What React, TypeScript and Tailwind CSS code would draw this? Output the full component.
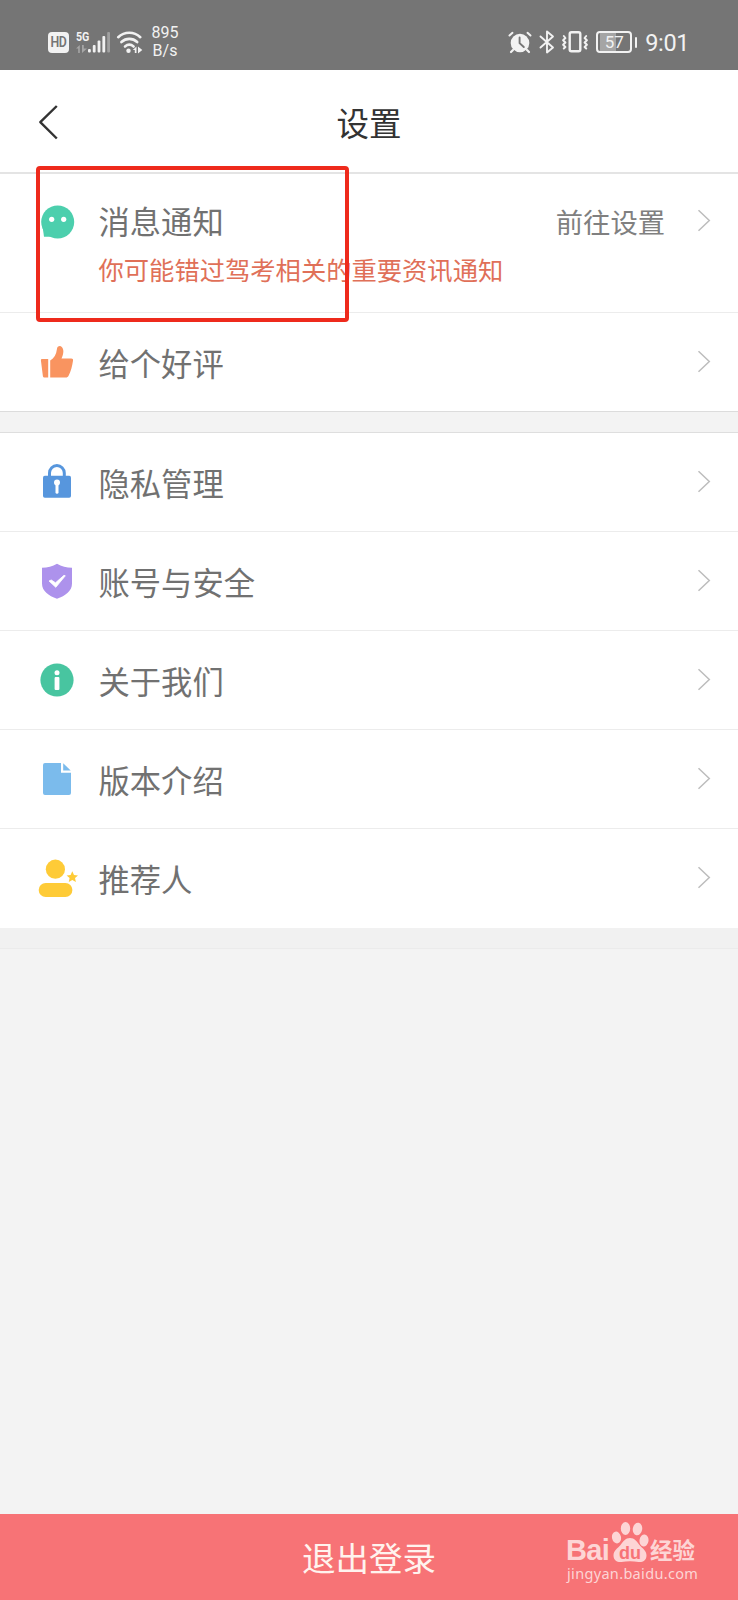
import type { ReactNode } from 'react';

const cjk = "font-['Noto_Sans_CJK_SC',sans-serif]";

function StatusBar() {
  return (
    <header className="flex h-[70px] shrink-0 items-center bg-[#757575] pt-[14px] pl-[48px] font-['Roboto',sans-serif] text-[#f2f2f2]">
      <div className="flex h-[21px] w-[21px] items-center justify-center rounded-[4px] bg-[#f2f2f2] pt-[1px] text-[13px] font-semibold tracking-tight text-[#757575]">
        <span className="origin-center scale-x-95 scale-y-110 leading-none">HD</span>
      </div>
      <div className="ml-[7px] flex h-[22px] w-[35px] items-end">
        <div className="flex w-[12px] flex-col">
          <span className="w-[14px] origin-left scale-x-[.82] text-[13px] leading-[11px] font-bold">5G</span>
          <svg className="mt-[2px] h-[9px] w-[11px]" viewBox="0 0 11 9" fill="#a6a6a6">
            <path d="M0 4.500 3.800 1v8H2.200V4.500zM6 1h1.800v3.500H11L6 9z" />
          </svg>
        </div>
        <svg className="h-[22px] w-[23px]" viewBox="0 0 23 22" fill="#f2f2f2">
          <rect x="0" y="18" width="2.8" height="3.5" rx="1" />
          <rect x="4.8" y="14" width="2.8" height="7.5" rx="1" />
          <rect x="9.6" y="9.5" width="2.8" height="12" rx="1" />
          <rect x="14.4" y="5" width="2.8" height="16.5" rx="1" />
          <rect x="19.2" y="1" width="2.8" height="20.5" rx="1" fill="#a0a0a0" />
        </svg>
      </div>
      <svg className="ml-[5px] h-[23px] w-[27px]" viewBox="0 0 27 23" fill="none" stroke="#f2f2f2" strokeWidth="2.6" strokeLinecap="round">
        <path d="M2.200 6.200C8.500 .2 18 .2 24.300 6.200" />
        <path d="M5.400 11C10 6.800 16.600 6.800 21.200 11" />
        <path d="M9 15.500c2.600-2.200 6-2.200 8.600 0" />
        <circle cx="12.500" cy="19.800" r="2.200" fill="#f2f2f2" stroke="none" />
        <path d="M16.800 19 20.500 15.500v6.500h-1.700v-3zM22 15.500l4.300 3.500-4.300 3.500z" fill="#f2f2f2" stroke="none" />
      </svg>
      <div className="ml-[7px] flex w-[30px] flex-col items-center text-[16px] leading-[18px]">
        <span>895</span>
        <span>B/s</span>
      </div>
      <div className="ml-auto flex items-center pr-[49px]">
        <svg className="h-[23px] w-[24px]" viewBox="0 0 24 23" fill="none" stroke="#f2f2f2" strokeLinecap="round">
          <circle cx="12" cy="12" r="9.300" fill="#f2f2f2" stroke="none" />
          <path d="M1.500 4.500 4.500 1.800M22.500 4.500 19.500 1.800" strokeWidth="2" />
          <path d="M5 19l-2 2M19 19l2 2" strokeWidth="2.200" />
          <path d="M11.600 6.500v5.700l4.200 3.800" stroke="#757575" strokeWidth="1.900" />
        </svg>
        <svg className="ml-[7px] h-[24px] w-[16px]" viewBox="0 0 16 24" fill="none" stroke="#f2f2f2" strokeWidth="1.900" strokeLinejoin="round" strokeLinecap="round">
          <path d="M1.500 6.500 14 17.500 8 22.500v-21l6 5L1.500 17.500" />
        </svg>
        <svg className="ml-[6px] h-[22px] w-[28px]" viewBox="0 0 28 22" fill="none" stroke="#f2f2f2" strokeWidth="2.400" strokeLinejoin="round" strokeLinecap="round">
          <rect x="8.700" y="1.300" width="10.600" height="19" rx="1.800" />
          <path d="M2.800 5l1.600 2-2.300 2.300 2.300 2.200-2.300 2.300 2.300 2.200-1.600 1.500M25.200 5l-1.600 2 2.300 2.300-2.300 2.200 2.300 2.300-2.300 2.200 1.600 1.500" strokeWidth="2" />
        </svg>
        <div className="ml-[7px] flex h-[22px] w-[36px] items-center justify-center rounded-[4px] border-2 border-[#f2f2f2] bg-[linear-gradient(90deg,#757575_2px,#a5a5a5_2px,#a5a5a5_18px,#757575_18px)] text-[17px] leading-none">
          57
        </div>
        <div className="ml-[3px] h-[11px] w-[2px] rounded bg-[#f2f2f2]" />
        <span className="ml-[8px] pt-[1px] text-[23.500px] leading-[24px] tracking-[-0.400px]">9:01</span>
      </div>
    </header>
  );
}

function MessageIcon() {
  return (
    <svg className="h-12 w-12" viewBox="0 0 48 48">
      <circle cx="24.700" cy="24" r="16.500" fill="#4ccfad" />
      <path d="M9.500 28 11 38.700h14z" fill="#4ccfad" />
      <circle cx="18.700" cy="21.300" r="2.600" fill="#fff" />
      <circle cx="30.700" cy="21.300" r="2.600" fill="#fff" />
    </svg>
  );
}

function ThumbIcon() {
  return (
    <svg className="h-12 w-12" viewBox="0 0 48 48" fill="#f99460">
      <path d="M9 21h6.200v18.500h-3.800a1.500 1.500 0 0 1-1.500-1.300L7.900 22.300A1.200 1.200 0 0 1 9 21z" />
      <path d="M17.200 22.500c4-2.500 6-6 6.700-11.300.2-2.800 3-4.200 4.900-2.300 2.300 2.500 2 6.500-.3 11.600h9.800c1.300 0 2 .8 1.700 2.200-.8 5.700-2.200 10.500-4.300 14.800-.7 1.400-1.600 2-3 2H17.200z" />
    </svg>
  );
}

function LockIcon() {
  return (
    <svg className="h-12 w-12" viewBox="0 0 48 48">
      <path d="M16.500 20v-5a7.400 7.400 0 0 1 14.800 0V20" fill="none" stroke="#5796dd" strokeWidth="3" />
      <rect x="10" y="17.800" width="28" height="22" rx="1.800" fill="#5796dd" />
      <circle cx="24" cy="24.600" r="3" fill="#fff" />
      <path d="M24 25v9.300" stroke="#fff" strokeWidth="3" strokeLinecap="round" />
    </svg>
  );
}

function ShieldIcon() {
  return (
    <svg className="h-12 w-12" viewBox="0 0 48 48">
      <path d="M24 6.700c4.500 2.800 9.500 4 15 4v15.800c0 7.500-6.500 12.300-15 15.200-8.500-2.900-15-7.700-15-15.200V10.700c5.500 0 10.500-1.200 15-4z" fill="#ad92ec" />
      <path d="M16 24l2.300-1 4.200 2.800L31 18.300l1.300.5-9.500 11.500z" fill="#fff" stroke="#fff" strokeWidth=".8" strokeLinejoin="round" />
    </svg>
  );
}

function InfoIcon() {
  return (
    <svg className="h-12 w-12" viewBox="0 0 48 48">
      <circle cx="24" cy="24" r="16.600" fill="#48c5a0" />
      <circle cx="24" cy="16.700" r="2.500" fill="#fff" />
      <rect x="21.600" y="21" width="4.800" height="13" rx="1" fill="#fff" />
    </svg>
  );
}

function DocumentIcon() {
  return (
    <svg className="h-12 w-12" viewBox="0 0 48 48" fill="#7bbbec">
      <path d="M12 8h16v9.800h10V38a2 2 0 0 1-2 2H12a2 2 0 0 1-2-2V10a2 2 0 0 1 2-2z" />
      <path d="M30.200 8.300 37.700 15.500h-7.500z" />
    </svg>
  );
}

function ReferrerIcon() {
  return (
    <svg className="h-12 w-12" viewBox="0 0 48 48" fill="#fecb37">
      <circle cx="22.400" cy="15.200" r="9.600" />
      <rect x="5.700" y="29" width="33.700" height="14" rx="7" />
      <path d="M39.300 17.300l1.700 3.700 4 .4-3 2.700.9 4-3.600-2.100-3.500 2.100.8-4-3-2.700 4-.4z" />
    </svg>
  );
}

function Chevron() {
  return (
    <svg className="mr-[27px] mb-[1px] ml-[32px] h-[23px] w-[14px] shrink-0" viewBox="0 0 14 23" fill="none" stroke="#bdbdbd" strokeWidth="1.500">
      <path d="M1.500 1.300 12.300 11.500 1.500 21.700" />
    </svg>
  );
}

function Row({ icon, label, border = 'border-[#ececec]' }: { icon: ReactNode; label: string; border?: string }) {
  return (
    <div className={`flex h-[99px] items-center border-b bg-white pl-[33px] ${border}`}>
      {icon}
      <span className="ml-[17.500px] flex-1 pt-[1px] text-[31.300px] leading-[44px] text-[#717171]">{label}</span>
      <Chevron />
    </div>
  );
}

function Watermark() {
  return (
    <div className="absolute right-[36px] bottom-[17px] flex w-[136px] flex-col text-[#fdd5d5]">
      <div className="flex items-end">
        <span className="w-[45px] font-['Liberation_Sans',sans-serif] text-[29px] leading-[27px] font-bold tracking-[-0.700px]">Bai</span>
        <svg className="h-[43px] w-[38px]" viewBox="0 0 38 43" fill="#fdd5d5">
          <ellipse cx="5.500" cy="16.500" rx="4.500" ry="6" transform="rotate(-12 5.500 16.500)" />
          <ellipse cx="14.500" cy="7.500" rx="4.700" ry="6.500" />
          <ellipse cx="26.500" cy="8" rx="4.700" ry="6.300" transform="rotate(10 26.500 8)" />
          <ellipse cx="33" cy="19.500" rx="4.500" ry="6" transform="rotate(8 33 19.500)" />
          <path d="M19 17c4.500 0 7 3.500 9.500 7 3 3.500 7 5.500 7 10.500 0 5-4 7-8 6.500-3-.5-5.500-.8-8.500-.8s-5.500.3-8.500.8c-4 .5-8-1.500-8-6.500 0-5 4-7 7-10.500 2.500-3.500 5-7 9.500-7z" />
          <text x="19" y="37.500" textAnchor="middle" fill="#f77376" fontFamily="Liberation Sans, sans-serif" fontSize="18" fontWeight="700">du</text>
        </svg>
        <span className={`ml-[1px] pb-[3px] text-[22.500px] leading-[24px] font-bold whitespace-nowrap ${cjk}`}>经验</span>
      </div>
      <span className="-mt-[1px] ml-[1px] font-['Noto_Sans',sans-serif] text-[14.500px] leading-[20px] tracking-[0.330px] whitespace-nowrap">jingyan.baidu.com</span>
    </div>
  );
}

export default function App() {
  return (
    <div className={`relative flex h-[1600px] w-[738px] flex-col overflow-hidden bg-[#f3f3f3] ${cjk}`}>
      <StatusBar />
      <nav className="grid h-[104px] shrink-0 grid-cols-3 items-center border-b-2 border-[#e4e4e4] bg-white">
        <svg className="mt-[1px] ml-[37px] h-[36px] w-[22px]" viewBox="0 0 22 36" fill="none" stroke="#333" strokeWidth="2.400" strokeLinejoin="round">
          <path d="M19.800 2 3.300 18.200 19.800 34.500" />
        </svg>
        <h1 className="pt-[2px] text-center text-[32.500px] leading-[44px] text-[#333]">设置</h1>
      </nav>
      <main className="flex flex-1 flex-col">
        <section className="flex h-[139px] border-b border-[#ececec] bg-white pt-[24px] pl-[33px]">
          <MessageIcon />
          <div className="ml-[17.500px] flex flex-1 flex-col">
            <div className="flex h-[46px] items-center">
              <span className="flex-1 text-[31.300px] leading-[44px] text-[#717171]">消息通知</span>
              <span className="text-[27.300px] leading-[44px] text-[#808080]">前往设置</span>
              <Chevron />
            </div>
            <p className="mt-[7px] text-[25.300px] leading-[36px] text-[#e07058]">你可能错过驾考相关的重要资讯通知</p>
          </div>
        </section>
        <Row icon={<ThumbIcon />} label="给个好评" border="border-[#dcdcdc]" />
        <div className="h-[21px] border-b border-[#dedede]" />
        <Row icon={<LockIcon />} label="隐私管理" />
        <Row icon={<ShieldIcon />} label="账号与安全" />
        <Row icon={<InfoIcon />} label="关于我们" />
        <Row icon={<DocumentIcon />} label="版本介绍" />
        <Row icon={<ReferrerIcon />} label="推荐人" border="border-white" />
        <div className="h-[21px] border-b border-[#ebebeb] bg-[#f1f1f1]" />
      </main>
      <button className="flex h-[86px] shrink-0 items-center justify-center bg-[#f77376] text-[33.500px] leading-[44px] text-[#fff3ee]">
        退出登录
      </button>
      <div className="absolute top-[166px] left-[36px] h-[156px] w-[313px] rounded-[4px] border-4 border-[#ee2a1c]" />
      <Watermark />
    </div>
  );
}
